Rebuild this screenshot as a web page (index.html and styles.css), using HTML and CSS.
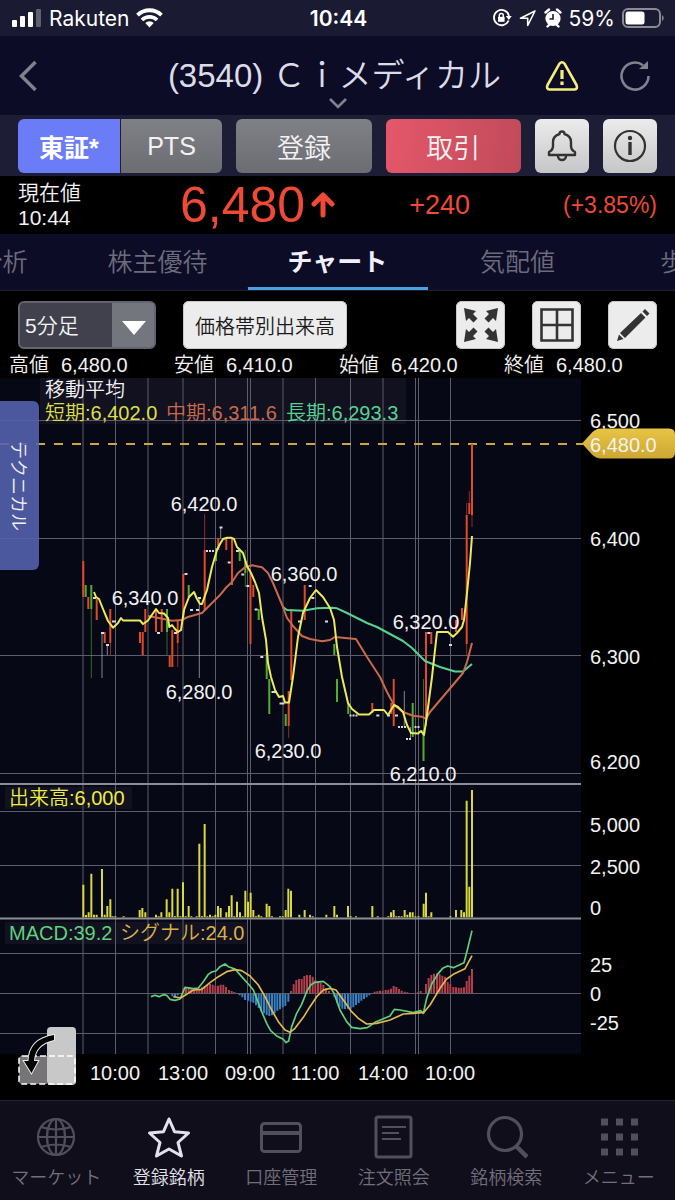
FILE: index.html
```
<!DOCTYPE html>
<html lang="ja">
<head>
  <meta charset="utf-8">
  <meta name="viewport" content="width=device-width, initial-scale=1">
  <title>(3540) Ｃｉメディカル - チャート</title>
  <link rel="stylesheet" href="styles.css">
</head>
<body>
  <div class="status-bar">
    <div class="status-left">
      <svg width="30" height="18" viewBox="0 0 30 18" fill="#fff">
        <rect x="0" y="11" width="5" height="7" rx="1"/>
        <rect x="8" y="7" width="5" height="11" rx="1"/>
        <rect x="16" y="3" width="5" height="15" rx="1"/>
        <rect x="24" y="0" width="5" height="18" rx="1" opacity=".3"/>
      </svg>
      <span>Rakuten</span>
      <svg width="27" height="20" viewBox="0 0 27 20" fill="none" stroke="#fff" stroke-width="3.800">
        <path d="M1.5 7.2a17 17 0 0 1 24 0"/>
        <path d="M6 12a10.8 10.8 0 0 1 15 0"/>
        <path d="M13.500 19.500l-4.200-4.500a6 6 0 0 1 8.400 0z" fill="#fff" stroke="none"/>
      </svg>
    </div>
    <div class="status-time">10:44</div>
    <div class="status-right">
      <svg width="20" height="20" viewBox="0 0 20 20" fill="none" stroke="#fff" stroke-width="1.800">
        <path d="M16.600 12.500A7.600 7.600 0 1 1 17 8"/>
        <path d="M13.800 8h6l-3 4z" fill="#fff" stroke="none"/>
        <rect x="6" y="8.800" width="6.600" height="5" fill="#fff" stroke="none"/>
        <path d="M7.300 9V7.500a2 2 0 0 1 4 0V9" stroke-width="1.400"/>
      </svg>
      <svg width="18" height="18" viewBox="0 0 18 18" fill="none" stroke="#fff" stroke-width="1.600" stroke-linejoin="round">
        <path d="M16 2L1.500 9.300h7.200v7.200z"/>
      </svg>
      <svg width="18" height="20" viewBox="0 0 18 20">
        <circle cx="9" cy="10.500" r="7.600" fill="#fff"/>
        <path d="M1.500 4.500l3.500-3M16.500 4.500l-3.500-3M3.500 18.500l2-2M14.500 18.500l-2-2" stroke="#fff" stroke-width="2.400" stroke-linecap="round"/>
        <path d="M9 6v5H5.500" fill="none" stroke="#1a1a33" stroke-width="1.600"/>
      </svg>
      <span>59%</span>
      <svg width="43" height="20" viewBox="0 0 43 20">
        <rect x="1" y="1" width="37" height="18" rx="5" fill="none" stroke="#8b8b98" stroke-width="2"/>
        <rect x="3.500" y="3.500" width="19" height="13" rx="2.500" fill="#fff"/>
        <path d="M40 7a3.500 3.500 0 0 1 0 6z" fill="#8b8b98"/>
      </svg>
    </div>
  </div>

  <header class="header">
    <button class="icon-btn" aria-label="戻る">
      <svg width="20" height="32" viewBox="0 0 20 32" fill="none" stroke="#82818f" stroke-width="3.500"><path d="M17.500 2L3.500 16l14 14"/></svg>
    </button>
    <h1>(3540) Ｃｉメディカル</h1>
    <div class="header-actions">
      <button class="icon-btn" aria-label="注意情報">
        <svg width="34" height="30" viewBox="0 0 34 30" fill="none" stroke="#f5ee7c" stroke-width="2.600" stroke-linejoin="round">
          <path d="M14.500 2.600q2.500-2.600 5 0l12 21.400q1.500 4-2 4.500h-25q-3.500-.5-2-4.500z"/>
          <path d="M17 9v9M17 20.500v3.500" stroke-width="3.200"/>
        </svg>
      </button>
      <button class="icon-btn" aria-label="更新">
        <svg width="32" height="32" viewBox="0 0 32 32" fill="none" stroke="#82818f" stroke-width="2.600">
          <path d="M29.500 16A13.500 13.500 0 1 1 24 5.200"/>
          <path d="M20 9h9V1z" fill="#82818f" stroke="none"/>
        </svg>
      </button>
    </div>
    <svg class="header-more" width="18" height="11" viewBox="0 0 18 11" fill="none" stroke="#82818f" stroke-width="2.600"><path d="M1 1l8 8 8-8"/></svg>
  </header>

  <div class="actions">
    <div class="market">
      <button class="market-btn active">東証*</button>
      <button class="market-btn">PTS</button>
    </div>
    <button class="btn">登録</button>
    <button class="btn trade">取引</button>
    <button class="btn light" aria-label="アラート">
      <svg width="30" height="32" viewBox="0 0 30 32" fill="none" stroke="#333" stroke-width="2.400" stroke-linejoin="round">
        <path d="M2 25v-3q4-2 4-6v-4q0-6 6.500-8 0-2.500 2.500-2.500T17.500 4q6.500 2 6.500 8v4q0 4 4 6v3z"/>
        <path d="M11 26a4 4 0 0 0 8 0"/>
      </svg>
    </button>
    <button class="btn light" aria-label="情報">
      <svg width="34" height="34" viewBox="0 0 34 34" fill="none" stroke="#333" stroke-width="2.200">
        <circle cx="17" cy="17" r="15"/>
        <circle cx="17" cy="9" r="2.200" fill="#333" stroke="none"/>
        <path d="M17 13v13" stroke-width="3.400"/>
      </svg>
    </button>
  </div>

  <div class="quote">
    <div class="quote-label">現在値<br>10:44</div>
    <div class="quote-price">6,480
      <svg width="24" height="26" viewBox="0 0 24 26" fill="none" stroke="#ef4a36" stroke-width="5" stroke-linecap="round" stroke-linejoin="round"><path d="M12 23V4M3 12l9-9 9 9"/></svg>
    </div>
    <div class="quote-change">+240</div>
    <div class="quote-rate">(+3.85%)</div>
  </div>

  <nav class="tabs">
    <a class="tab tab-cut" href="#">分析</a>
    <a class="tab" href="#">株主優待</a>
    <a class="tab active" href="#">チャート</a>
    <a class="tab" href="#">気配値</a>
    <a class="tab" href="#">歩み値</a>
  </nav>

  <main class="content">
    <div class="toolbar">
      <div class="period">
        <select aria-label="足種"><option>5分足</option></select>
      </div>
      <button class="tool-btn wide">価格帯別出来高</button>
      <div class="tool-icons">
        <button class="tool-btn" aria-label="全画面">
          <svg width="36" height="36" viewBox="0 0 36 36" fill="#333">
            <path id="arrow" d="M1 1l12 3-3 3 4.500 4.500-4 4L6 11l-3 3z"/>
            <use href="#arrow" transform="translate(36 0) scale(-1 1)"/>
            <use href="#arrow" transform="translate(0 36) scale(1 -1)"/>
            <use href="#arrow" transform="translate(36 36) scale(-1 -1)"/>
          </svg>
        </button>
        <button class="tool-btn" aria-label="分割表示">
          <svg width="34" height="34" viewBox="0 0 34 34" fill="none" stroke="#333" stroke-width="2.600"><path d="M1.500 1.500h31v31h-31zM17 1v32M1 17h32"/></svg>
        </button>
        <button class="tool-btn" aria-label="描画">
          <svg width="34" height="34" viewBox="0 0 34 34" fill="#333">
            <path d="M25 5l4.500 4.500L9 30l-5-5zM26.500 3.500L29 1l4.500 4.500L31 8zM3 26.500L7.500 31 1 33z"/>
          </svg>
        </button>
      </div>
    </div>

    <dl class="ohlc">
      <div><dt>高値</dt><dd>6,480.0</dd></div>
      <div><dt>安値</dt><dd>6,410.0</dd></div>
      <div><dt>始値</dt><dd>6,420.0</dd></div>
      <div><dt>終値</dt><dd>6,480.0</dd></div>
    </dl>

    <div class="chart">
      <svg class="chart-svg" viewBox="0 378 675 722">
        <defs>
          <linearGradient id="gold" x1="0" y1="0" x2="0" y2="1">
            <stop offset="0" stop-color="#e7c545"/>
            <stop offset="1" stop-color="#cda733"/>
          </linearGradient>
        </defs>
        <rect class="plot" x="0" y="378" width="581" height="676"/>
        <rect class="legend-bg" x="40" y="378" width="366" height="46"/>
        <rect class="legend-bg" x="5" y="787" width="127" height="22"/>
        <rect class="legend-bg" x="5" y="922" width="242" height="22"/>

        <!-- grid -->
        <path class="grid" d="M83 378V1054M115.500 378V1054M148 378V1054M183 378V1054M215.500 378V1054M247.500 378V1054M250.500 378V1054M283 378V1054M315.500 378V1054M350.500 378V1054M383 378V1054M415.500 378V1054M418.500 378V1054M450.500 378V1054"/>
        <path class="grid" d="M0 420.500H581M0 538.500H581M0 655.500H581M0 773.500H581M0 811.500H581M0 865.500H581M0 953.500H581M0 993.500H581M0 1033.500H581"/>
        <path class="divider" d="M0 784H581M0 918.500H581"/>

        <path class="last-price" d="M0 444H583"/>

        <!-- candles -->
        <path class="wick up" d="M110.500 643V655M177.700 643V667M204.700 514V550M288.700 726V738M466.700 503V515M466.700 643V655M469.300 491V503M472 515V527"/>
        <path class="wick down" d="M91.300 609V678M167 632V655M245.300 550V587M423.500 679V730"/>
        <path class="wick flat" d="M102 632V678M107.300 645V655M199.300 597V678M220.700 527V538M404.300 691V727M410.500 727V739"/>
        <path class="body up" d="M83.300 561V597M88.300 597V609M96.700 599V620M104.700 632V643M110.300 609V643M140 632V643M142.700 632V655M145.300 609V632M156 609V632M161.700 609V632M169.700 656V667M172.300 630V667M177.700 620V643M183.300 574V620M204.700 550V610M218.300 538V550M226.300 538V550M232 538V585M250.500 573V644M253.300 585V597M288.700 691V726M291.300 609V680M304.700 585V620M372.300 703V713M391.300 703V714M393.700 679V726M426 632V726M431.300 632V644M456 620V632M462 608V620M466.700 515V644M469.300 503V514M472 444V515"/>
        <path class="body down" d="M85.700 585V597M91.300 585V609M167 609V632M188.700 585V597M216 548V561M239.700 550V561M245.300 561V573M258.700 609V620M266.700 653V679M269.300 679V714M285.700 714V726M334.300 644V655M337 679V702M348.300 703V714M412.700 703V737M423.500 730V761"/>
        <path class="body flat" d="M93 598h3M101 633h3M106 645h3M112 621.500h4M157 633h3M174 633h3M184.500 574h3M190 610h3M196 610h3M198 598h3M219.500 527.500h3M227.700 562.500h3M236 551h3M241.300 574.500h3M246.300 586h3M254.600 609.500h3M260.300 657h3M271.500 692h5M279.500 703.500h5M298 621.500h3M308.700 586h3M311.300 598h3M325 621.500h3M376.300 715.500h3M387 715.500h3M395 715.500h3M427.300 633h3M449 645h3"/>
        <path class="body flat" stroke-dasharray="2 1" d="M206 551h9M349.500 715.500h9M398 727h8M406 739h6M414.500 727h5"/>

        <!-- moving averages -->
        <polyline class="line ma-long" points="283,607 287,610 303,610.700 317,608.300 332,607.700 337,608.300 347,613 367,623 377,627 390,634 403,641 412,648 425,661 440,667 455,671.500 463,671.500 472,664"/>
        <polyline class="line ma-mid" points="148,616 160,618.300 172,620.700 182,620 187,617.300 202,613 213,602 220,595 227,586.700 232,582 238,573 245,567.300 252,565.300 262,567.300 268,573 273,583 283,607 287,618 293,626 302,636 310,639 322,641.300 330,640 335,637 345,638 356,639 367,657 380,677 387,692 394,705 403,712 413,715.700 422,716.700 426,719 430,712 447,692 463,673 467,662 472,643"/>
        <polyline class="line ma-short" points="94,592 96,597 99,599 103,609 108,621 113,627.700 118,623 121,618 123,620.500 140,620.500 143,624 148,620.500 156,609 159,613 164,613.500 168,618 169.300,627 172,625 175,629 178,632 181,630 184,610 189,597 194,592 197,599 200,604 202,604 207,590 212,567 217,550 220,544 223,539 227,537.700 231,537.700 234,539 237,547 243,553 247,566 251,573 255,582 259,593 262,617 266,640 268,663 271,677 275,690 279,697 283,696 285,702.500 289,702.500 293,677 298,637 303,613 310,598 316,590 323,597 330,608 334,620 337,647 342,677 348,703 352,709 359,714.500 369,714.500 374,710 384,710 388,715 394,705 398,707 403,712 407,725 411,733 418,733.500 421,731 424,735 427,715 432,677 437,632 448,632 453,636.700 457,633 462,627 464,620 467,593 470,563 472,536"/>

        <!-- volume and MACD share a finer coordinate grid, three units to one -->
        <g transform="translate(60 780) scale(.33333)">
          <path class="volume" d="M70 412V314M78 412V405M86 412V397M94 412V281M102 412V404M110 412V404M126 412V267M134 412V404M142 412V378M151 412V358M158 412V409M166 412V409M191 412V409M239 412V390M247 412V384M256 412V397M288 412V404M296 412V409M304 412V397M320 412V358M328 412V397M337 412V326M345 412V409M353 412V326M361 412V409M369 412V307M377 412V409M386 412V378M394 412V409M410 412V409M418 412V191M426 412V409M434 412V132M442 412V409M450 412V404M458 412V409M466 412V404M474 412V378M482 412V384M499 412V397M507 412V378M515 412V346M523 412V409M531 412V365M540 412V397M548 412V409M556 412V332M564 412V365M572 412V338M580 412V390M588 412V409M596 412V404M604 412V409M620 412V371M628 412V378M636 412V409M660 412V409M668 412V409M677 412V390M685 412V326M693 412V332M718 412V404M734 412V390M750 412V404M758 412V409M799 412V404M823 412V378M831 412V404M864 412V378M872 412V409M888 412V409M937 412V378M953 412V409M985 412V409M993 412V397M1001 412V390M1009 412V409M1017 412V409M1025 412V409M1034 412V390M1042 412V404M1050 412V397M1058 412V397M1066 412V409M1075 412V409M1091 412V371M1098 412V338M1106 412V409M1114 412V397M1171 412V409M1188 412V390M1204 412V390M1212 412V397M1220 412V62M1228 412V320M1236 412V30"/>
          <path class="hist plus" d="M370 639V625M378 639V622M386 639V622M394 639V626M402 639V628M410 639V628M418 639V627M426 639V622M434 639V618M442 639V615M450 639V612M458 639V614M466 639V617M474 639V617M482 639V614M490 639V614M498 639V621M507 639V630M515 639V633M523 639V636M693 639V633M701 639V613M709 639V600M717 639V597M725 639V597M733 639V588M741 639V585M750 639V585M758 639V590M766 639V600M774 639V604M782 639V608M790 639V615M798 639V624M807 639V633M944 639V635M952 639V634M960 639V632M968 639V632M977 639V630M985 639V629M993 639V626M1001 639V618M1009 639V621M1017 639V627M1025 639V632M1034 639V635M1042 639V637M1074 639V637M1082 639V633M1098 639V612M1106 639V594M1114 639V585M1122 639V581M1131 639V580M1139 639V583M1147 639V587M1155 639V590M1163 639V605M1171 639V613M1180 639V621M1188 639V622M1196 639V623M1204 639V623M1212 639V622M1220 639V603M1228 639V587M1236 639V567"/>
          <path class="hist minus" d="M337 641V649M345 641V650M353 641V646M539 641V646M547 641V652M555 641V660M564 641V662M572 641V665M580 641V668M588 641V676M596 641V684M604 641V692M612 641V700M620 641V705M628 641V708M636 641V706M644 641V700M652 641V692M660 641V688M668 641V682M676 641V678M685 641V665M823 641V650M831 641V668M839 641V680M847 641V686M855 641V687M864 641V686M872 641V686M880 641V682M888 641V675M896 641V669M904 641V662M912 641V657M920 641V652M928 641V646"/>
          <polyline class="osc macd" points="273,650 285,646 297,650 310,644 320,646 330,658 345,661 360,657 375,622 400,626 415,624 430,605 445,583 455,576 468,573 480,560 495,552 505,560 525,567 545,590 565,612 580,630 590,655 605,695 620,730 632,752 650,768 670,778 678,788 686,783 695,740 710,700 725,673 740,635 752,615 765,607 790,604 810,620 822,640 840,690 860,725 875,742 900,746 922,743 945,727 970,716 990,708 1003,688 1020,690 1060,698 1082,692 1090,700 1100,655 1115,612 1135,580 1148,565 1163,558 1180,563 1212,548 1222,510 1236,452"/>
          <polyline class="osc signal" points="340,650 362,654 380,643 400,630 425,628 450,608 475,590 500,575 525,569 545,572 570,588 595,615 615,650 635,690 655,725 675,750 690,757 705,745 730,712 750,680 770,650 790,630 810,625 828,630 850,660 875,695 895,715 920,732 950,730 990,720 1030,702 1060,700 1092,697 1110,675 1140,625 1160,597 1180,583 1215,566 1236,527"/>
        </g>

        <!-- legends -->
        <g class="label">
          <text x="45" y="397">移動平均</text>
          <text class="t-short" x="45" y="420">短期:6,402.0</text>
          <text class="t-mid" x="166" y="420">中期:6,311.6</text>
          <text class="t-long" x="286" y="420">長期:6,293.3</text>
          <text class="t-volume" x="9" y="805">出来高:6,000</text>
          <text class="t-macd" x="9" y="940">MACD:39.2</text>
          <text class="t-signal" x="120" y="940">シグナル:24.0</text>
        </g>

        <!-- swing highs and lows -->
        <g class="label mid">
          <text x="204" y="511">6,420.0</text>
          <text x="145" y="605">6,340.0</text>
          <text x="199" y="699">6,280.0</text>
          <text x="304" y="581">6,360.0</text>
          <text x="288" y="758">6,230.0</text>
          <text x="426" y="629">6,320.0</text>
          <text x="423" y="781">6,210.0</text>
        </g>

        <!-- axes -->
        <g class="label">
          <text x="590" y="428">6,500</text>
          <text x="590" y="546">6,400</text>
          <text x="590" y="664">6,300</text>
          <text x="590" y="769">6,200</text>
          <text x="590" y="832">5,000</text>
          <text x="590" y="874">2,500</text>
          <text x="590" y="915">0</text>
          <text x="590" y="972">25</text>
          <text x="590" y="1001">0</text>
          <text x="590" y="1030">-25</text>
        </g>
        <g class="label mid">
          <text x="115" y="1080">10:00</text>
          <text x="183" y="1080">13:00</text>
          <text x="250" y="1080">09:00</text>
          <text x="315" y="1080">11:00</text>
          <text x="383" y="1080">14:00</text>
          <text x="450" y="1080">10:00</text>
        </g>
        <path d="M582 443.500l10-11q4-4 9-4h68q6 0 6 6v18q0 6-6 6h-68q-5 0-9-4z" fill="url(#gold)"/>
        <text class="label" x="590" y="452">6,480.0</text>
      </svg>

      <button class="technical">テクニカル</button>
      <button class="rotate" aria-label="画面回転">
        <svg width="58" height="58" viewBox="0 0 58 58">
          <path d="M29 29H4q-3 0-3 3v22q0 3 3 3h25z" fill="#767476"/>
          <rect x="29" y="0" width="29" height="58" rx="4" fill="#c8c8c8"/>
          <rect x="1" y="29" width="56" height="28" rx="3" fill="none" stroke="#fff" stroke-width="1.500" stroke-dasharray="6 3"/>
          <path d="M36 8Q11 12 10.500 34H6l7.500 12L20 34h-4Q17 17 36 13z" fill="#000" stroke="#e8e8e8" stroke-width="2" paint-order="stroke"/>
        </svg>
      </button>
    </div>
  </main>

  <nav class="bottom-nav">
    <a class="nav-item" href="#">
      <svg width="44" height="44" viewBox="0 0 44 44" fill="none" stroke="currentColor" stroke-width="2.200">
        <circle cx="22" cy="22" r="18"/><ellipse cx="22" cy="22" rx="9" ry="18"/>
        <path d="M22 4v36M4 22h36M7 12q15 5 30 0M7 32q15-5 30 0"/>
      </svg>
      <span>マーケット</span>
    </a>
    <a class="nav-item active" href="#">
      <svg width="44" height="44" viewBox="0 0 44 44" fill="none" stroke="currentColor" stroke-width="3" stroke-linejoin="round">
        <path d="M22 4l5.500 12.700 14 1.300-10.500 9.500L34.500 41 22 34 9.500 41 13 27.500 2.500 18l14-1.300z"/>
      </svg>
      <span>登録銘柄</span>
    </a>
    <a class="nav-item" href="#">
      <svg width="44" height="44" viewBox="0 0 44 44" fill="none" stroke="currentColor" stroke-width="3">
        <rect x="2.500" y="8.500" width="39" height="28" rx="3"/><path d="M2 18h40" stroke-width="4"/>
      </svg>
      <span>口座管理</span>
    </a>
    <a class="nav-item" href="#">
      <svg width="44" height="44" viewBox="0 0 44 44" fill="none" stroke="currentColor" stroke-width="3">
        <rect x="4" y="2" width="35" height="40" rx="2"/><path d="M10 12h24M10 18h17M10 24h19" stroke-width="2.200"/>
      </svg>
      <span>注文照会</span>
    </a>
    <a class="nav-item" href="#">
      <svg width="44" height="44" viewBox="0 0 44 44" fill="none" stroke="currentColor" stroke-width="3.200">
        <circle cx="21" cy="19" r="16.500"/><path d="M32 31l11 11" stroke-width="4.500"/>
      </svg>
      <span>銘柄検索</span>
    </a>
    <a class="nav-item" href="#">
      <svg width="44" height="44" viewBox="0 0 44 44" fill="none" stroke="currentColor" stroke-width="7">
        <path stroke-dasharray="7 8" d="M4 7h38M4 22h38M4 37h38"/>
      </svg>
      <span>メニュー</span>
    </a>
  </nav>
</body>
</html>
```

FILE: styles.css
```
* {
  box-sizing: border-box;
}

body {
  margin: 0;
  min-height: 100vh;
  display: flex;
  flex-direction: column;
  background: #000;
  color: #f2f2f2;
  font-family: "Liberation Sans", "Noto Sans CJK JP", sans-serif;
  font-weight: 350;
  overflow-x: hidden;
}

button, select {
  font: inherit;
  color: inherit;
  border: none;
  padding: 0;
  cursor: pointer;
}

a {
  color: inherit;
  text-decoration: none;
}

svg {
  display: block;
  flex-shrink: 0;
}

.status-bar {
  display: grid;
  grid-template-columns: 1fr auto 1fr;
  align-items: center;
  height: 36px;
  padding: 0 10px 0 12px;
  background: #1a1a33;
  color: #fff;
  font-family: Inter, sans-serif;
  font-size: 21px;
  font-weight: 400;
}

.status-left, .status-right {
  display: flex;
  align-items: center;
  gap: 7px;
}

.status-right {
  justify-content: flex-end;
}

.status-time {
  font-weight: 600;
}

.header {
  position: relative;
  display: grid;
  grid-template-columns: 110px 1fr 110px;
  align-items: center;
  height: 79px;
  padding: 0 24px 0 18px;
  background: #0c0c26;
}

.header h1 {
  margin: 0;
  font-size: 33px;
  font-weight: 350;
  line-height: 40px;
  color: #dcdbe8;
  text-align: center;
  white-space: nowrap;
}

.header-actions {
  display: flex;
  justify-content: flex-end;
  gap: 40px;
}

.header-more {
  position: absolute;
  left: 50%;
  bottom: 6px;
  margin-left: -9px;
}

.icon-btn {
  background: none;
}

.actions {
  display: flex;
  gap: 14px;
  height: 61px;
  padding: 4px 18px 3px;
  background: #1d1d36;
}

.market {
  display: flex;
  flex: 204 1 0;
  gap: 1px;
}

.market-btn {
  flex: 1;
  background: linear-gradient(#808186, #6c6d73);
  font-size: 25px;
  border-radius: 0 6px 6px 0;
}

.market-btn.active {
  background: #6b7df6;
  color: #fff;
  font-weight: bold;
  border-radius: 6px 0 0 6px;
}

.btn {
  display: flex;
  align-items: center;
  justify-content: center;
  flex: 135 1 0;
  border-radius: 6px;
  background: linear-gradient(#808186, #6c6d73);
  font-size: 27px;
}

.btn.trade {
  background: linear-gradient(100deg, #e4586a, #c04a5a);
}

.btn.light {
  flex: 54 1 0;
  background: linear-gradient(#ececec, #c6c6c8);
}

.quote {
  display: grid;
  grid-template-columns: 162px 1fr 128px 187px;
  align-items: center;
  height: 58px;
  padding: 0 18px;
  color: #ef4a36;
}

.quote-label {
  font-size: 21px;
  line-height: 25px;
  color: #f2f2f2;
}

.quote-price {
  display: flex;
  align-items: center;
  gap: 6px;
  font-size: 50px;
  line-height: 58px;
}

.quote-change {
  font-size: 27px;
  text-align: right;
}

.quote-rate {
  font-size: 23px;
  text-align: right;
}

.tabs {
  display: flex;
  justify-content: center;
  height: 57px;
  background: #0c0c26;
  border-bottom: 1px solid #1e1e30;
  overflow: hidden;
}

.tab {
  flex: 0 0 180px;
  height: 57px;
  font-size: 25px;
  line-height: 56px;
  text-align: center;
  color: #6c6b7c;
}

.tab.active {
  color: #f0effa;
  font-weight: bold;
  border-bottom: 4px solid #4aa0e0;
}

.tab-cut {
  padding-right: 40px;
  text-align: right;
}

.content {
  flex: 1;
}

.toolbar {
  display: flex;
  gap: 27px;
  padding: 10px 18px 0;
}

.period {
  position: relative;
  width: 138px;
  height: 48px;
}

.period select {
  width: 100%;
  height: 100%;
  padding-left: 5px;
  appearance: none;
  border: 2px solid #64656c;
  border-radius: 6px;
  background: linear-gradient(90deg, #40414c 92px, #73767d 92px);
  font-size: 21px;
}

.period::after {
  content: "";
  position: absolute;
  right: 10px;
  top: 20px;
  border: 12px solid transparent;
  border-top: 14px solid #fff;
  border-bottom: 0;
  pointer-events: none;
}

.tool-btn {
  display: flex;
  align-items: center;
  justify-content: center;
  width: 49px;
  height: 48px;
  border-radius: 6px;
  background: #ececec;
  box-shadow: inset 0 0 0 1px #c8c8cc;
  color: #1a1a1a;
  font-size: 20px;
}

.tool-btn.wide {
  width: auto;
  padding: 0 12px;
}

.tool-icons {
  display: flex;
  gap: 27px;
  margin-left: auto;
}

.ohlc {
  display: grid;
  grid-template-columns: repeat(4, 1fr);
  margin: 0;
  padding: 3px 6px 0 9px;
  font-size: 20px;
  line-height: 26px;
}

.ohlc div {
  display: flex;
  gap: 12px;
}

.ohlc dd {
  margin: 0;
}

.chart {
  position: relative;
}

.chart-svg {
  width: 100%;
  height: auto;
}

.plot {
  fill: #070815;
}

.legend-bg {
  fill: #11111f;
}

.grid {
  stroke: #5c5d68;
  stroke-width: 1;
}

.divider {
  stroke: #8c8d94;
  stroke-width: 2;
}

.last-price {
  stroke: #c9a93c;
  stroke-width: 2;
  stroke-dasharray: 9 9;
}

.wick {
  stroke-width: 1;
  opacity: 0.6;
}

.body {
  stroke-width: 2;
}

.up {
  stroke: #e0492a;
}

.down {
  stroke: #4fae2c;
}

.flat {
  stroke: #d8d8e0;
}

.line, .osc {
  fill: none;
  stroke-width: 2;
  stroke-linejoin: round;
}

.osc {
  stroke-width: 5;
}

.ma-short {
  stroke: #e9ea5c;
}

.ma-mid {
  stroke: #c9694c;
}

.ma-long {
  stroke: #56d293;
}

.volume {
  stroke: #d8d93c;
  stroke-width: 6;
}

.hist {
  stroke-width: 6;
}

.plus {
  stroke: #b2404a;
}

.minus {
  stroke: #3a7fc0;
}

.macd {
  stroke: #5fd07f;
}

.signal {
  stroke: #e2b950;
}

.label {
  fill: #f2f2f2;
  font-size: 20px;
}

.mid {
  text-anchor: middle;
}

.t-short {
  fill: #dcdf4a;
}

.t-mid {
  fill: #c9694c;
}

.t-long {
  fill: #56d293;
}

.t-volume {
  fill: #eeee3c;
}

.t-macd {
  fill: #5fd07f;
}

.t-signal {
  fill: #d9b04c;
}

.technical {
  position: absolute;
  left: 0;
  top: 23px;
  width: 39px;
  height: 169px;
  border-radius: 0 6px 6px 0;
  background: rgba(84, 98, 172, 0.9);
  font-size: 18px;
  writing-mode: vertical-rl;
  text-orientation: sideways;
}

.rotate {
  position: absolute;
  left: 18px;
  bottom: 15px;
  background: none;
}

.bottom-nav {
  display: grid;
  grid-template-columns: repeat(6, 1fr);
  height: 100px;
  padding-top: 14px;
  background: #100e1a;
  border-top: 1px solid #24222e;
}

.nav-item {
  display: flex;
  flex-direction: column;
  align-items: center;
  gap: 6px;
  color: #514f5c;
  font-size: 18px;
  line-height: 26px;
}

.nav-item span {
  color: #716f7c;
}

.nav-item.active, .nav-item.active span {
  color: #e2e0ea;
}
```
